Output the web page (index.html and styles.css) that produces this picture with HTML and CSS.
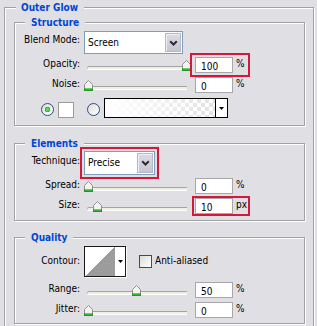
FILE: index.html
```html
<!DOCTYPE html>
<html>
<head>
<meta charset="utf-8">
<link rel="stylesheet" href="styles.css">
</head>
<body>
<svg class="defs" width="0" height="0" aria-hidden="true">
  <defs>
    <symbol id="thumb" viewBox="0 0 9 11">
      <path d="M.5 4.5L4.5 .5l4 4v6h-8z" fill="#f2f2ee" stroke="#8e8f8f"/>
      <path d="M1.5 4.8L4.5 1.8" stroke="#fff" fill="none"/>
      <rect x="0" y="8.5" width="9" height="2.5" fill="#1d971d"/>
      <rect x="1" y="8.5" width="7" height="1" fill="#5ccc5c"/>
    </symbol>
    <symbol id="chev" viewBox="0 0 9 6">
      <path d="M1.2 1.2L4.5 4.5 7.8 1.2" fill="none" stroke="#2b2b33" stroke-width="2"/>
    </symbol>
    <symbol id="tri" viewBox="0 0 5 3">
      <path d="M0 0h5L2.5 3z" fill="#000"/>
    </symbol>
  </defs>
</svg>

<fieldset class="group outer">
  <legend>Outer Glow</legend>

  <fieldset class="group sec sec-structure">
    <legend>Structure</legend>
    <div class="row r-select r-blend">
      <span class="lbl">Blend Mode:</span>
      <span class="select sel-blend"><span class="sel-text">Screen</span><span class="sel-btn"><svg width="9" height="6"><use href="#chev"/></svg></span></span>
    </div>
    <div class="row r-val r-first">
      <span class="lbl">Opacity:</span>
      <span class="slider"><span class="track"></span><svg class="thumb" width="9" height="11" style="left:98px"><use href="#thumb"/></svg></span>
      <span class="val mark mark-opacity"><span class="num">100</span><span class="unit">%</span></span>
    </div>
    <div class="row r-val">
      <span class="lbl">Noise:</span>
      <span class="slider"><span class="track"></span><svg class="thumb" width="9" height="11" style="left:0px"><use href="#thumb"/></svg></span>
      <span class="val"><span class="num">0</span><span class="unit">%</span></span>
    </div>
    <div class="row r-fill">
      <span class="radio on"></span>
      <span class="swatch"></span>
      <span class="radio"></span>
      <span class="gradpick"><span class="grad"></span><span class="gp-btn"><svg width="5" height="3"><use href="#tri"/></svg></span></span>
    </div>
  </fieldset>

  <fieldset class="group sec sec-elements">
    <legend>Elements</legend>
    <div class="row r-select r-tech">
      <span class="lbl">Technique:</span>
      <span class="select sel-tech mark mark-tech"><span class="sel-text">Precise</span><span class="sel-btn"><svg width="9" height="6"><use href="#chev"/></svg></span></span>
    </div>
    <div class="row r-val r-first">
      <span class="lbl">Spread:</span>
      <span class="slider"><span class="track"></span><svg class="thumb" width="9" height="11" style="left:0px"><use href="#thumb"/></svg></span>
      <span class="val"><span class="num">0</span><span class="unit">%</span></span>
    </div>
    <div class="row r-val">
      <span class="lbl">Size:</span>
      <span class="slider"><span class="track"></span><svg class="thumb" width="9" height="11" style="left:9px"><use href="#thumb"/></svg></span>
      <span class="val mark mark-size"><span class="num">10</span><span class="unit">px</span></span>
    </div>
  </fieldset>

  <fieldset class="group sec sec-quality">
    <legend>Quality</legend>
    <div class="row r-contour">
      <span class="lbl">Contour:</span>
      <span class="contour">
        <svg class="curve" width="30" height="29" viewBox="0 0 30 29" shape-rendering="crispEdges"><rect width="30" height="29" fill="#fff"/><path d="M0 29L30 0V29z" fill="#9c9c9c"/></svg>
        <span class="ct-btn"><svg width="5" height="3"><use href="#tri"/></svg></span>
      </span>
      <span class="check"></span>
      <span class="check-lbl">Anti-aliased</span>
    </div>
    <div class="row r-val r-range">
      <span class="lbl">Range:</span>
      <span class="slider"><span class="track"></span><svg class="thumb" width="9" height="11" style="left:48px"><use href="#thumb"/></svg></span>
      <span class="val"><span class="num">50</span><span class="unit">%</span></span>
    </div>
    <div class="row r-val">
      <span class="lbl">Jitter:</span>
      <span class="slider"><span class="track"></span><svg class="thumb" width="9" height="11" style="left:0px"><use href="#thumb"/></svg></span>
      <span class="val"><span class="num">0</span><span class="unit">%</span></span>
    </div>
  </fieldset>
</fieldset>
</body>
</html>
```
FILE: styles.css
```css
* { box-sizing: border-box; }
html, body { margin: 0; padding: 0; background: #e0dfe3; }
body {
  width: 317px;
  height: 326px;
  overflow: hidden;
  font: 10px/12px "DejaVu Sans Condensed", "DejaVu Sans", sans-serif;
  color: #000;
}
.defs { position: absolute; width: 0; height: 0; }

/* group boxes */
.group {
  border: 1px solid #a2a1a6;
  box-shadow: inset 1px 1px 0 #fff, 1px 1px 0 #fff;
  min-width: 0;
  margin: 0;
}
.group > legend {
  font-weight: bold;
  color: #0046d5;
  line-height: 13px;
  background: #e0dfe3;
}
.outer {
  width: 310px;
  margin: 1px 0 0 4px;
  padding: 2px 8px 14px 9px;
}
.outer > legend { margin-left: 2px; padding: 0 6px 0 5px; }
.sec > legend { margin-left: 10px; padding: 0 6px; }
.sec-structure { padding: 2px 0 7px 0; }
.sec-elements { margin-top: 11px; padding: 1px 0 6px 0; }
.sec-quality { margin-top: 10px; padding: 2px 0 5px 0; }

/* rows */
.row { display: flex; align-items: center; }
.lbl {
  flex: none;
  width: 65px;
  margin-right: 4px;
  text-align: right;
  white-space: nowrap;
  padding-bottom: 2px;
}
.r-select .lbl { padding-bottom: 5px; }
.r-blend { height: 23px; }
.r-tech { height: 24px; }
.r-val { height: 16px; margin-top: 4px; }
.r-val.r-first { margin-top: 3px; }
.r-fill { height: 20px; margin-top: 5px; padding-left: 26px; align-items: flex-end; }
.r-contour { height: 31px; }
.r-val.r-range { margin-top: 5px; }

/* select */
.select {
  display: flex;
  height: 100%;
  border: 1px solid #7f9db9;
  background: #fff;
  position: relative;
}
.sel-blend { width: 99px; }
.sel-tech { width: 71px; }
.sel-text { flex: 1; padding: 5px 0 0 3px; white-space: nowrap; }
.sel-btn {
  flex: none;
  width: 16px;
  margin: 1px;
  display: flex;
  align-items: center;
  justify-content: center;
  background: linear-gradient(#dcdce6, #c6c6d2);
  border: 1px solid #b5b6c6;
  box-shadow: inset 1px 1px 0 #eeeef4;
}

/* slider */
.slider {
  flex: none;
  position: relative;
  width: 107px;
  height: 11px;
  margin-right: 4px;
}
.track {
  position: absolute;
  left: 3px;
  right: 4px;
  top: 6px;
  height: 3px;
  border-top: 1px solid #a3a3a3;
  border-left: 1px solid #b5b5b5;
  border-radius: 2px 0 0 2px;
  background: #f1efe4;
  box-shadow: 0 1px 0 #fff;
}
.thumb { position: absolute; top: 0; display: block; }

/* value field */
.val { display: flex; align-items: center; position: relative; height: 16px; }
.num {
  width: 38px;
  height: 16px;
  border: 1px solid #a7a6aa;
  background: #fff;
  padding: 3px 0 0 5px;
  line-height: 11px;
  overflow: hidden;
}
.unit { margin-left: 3px; padding-bottom: 3px; }

/* red annotation frames */
.mark::after {
  content: "";
  position: absolute;
  border: 2px solid #d2193c;
  pointer-events: none;
}
.mark-opacity::after { top: -4px; bottom: -4px; left: -5px; right: -5px; }
.mark-tech::after { top: -5px; bottom: -5px; left: -5px; right: -5px; }
.mark-size::after { top: -2px; bottom: -2px; left: -3px; right: -3px; }

/* radios, swatch, gradient picker */
.radio {
  flex: none;
  width: 13px;
  height: 13px;
  border-radius: 50%;
  border: 1px solid #2d4f7c;
  background: linear-gradient(135deg, #dcdcd6, #fff);
  margin-bottom: 2px;
}
.radio.on {
  background: radial-gradient(circle, #5bd55b 0 1.5px, #1f991f 2.5px, transparent 3px), linear-gradient(135deg, #dcdcd6, #fff);
}
.swatch {
  flex: none;
  width: 16px;
  height: 16px;
  margin-left: 4px;
  border: 1px solid #9b9b9b;
  background: #fff;
}
.radio + .swatch + .radio { margin-left: 13px; }
.gradpick {
  flex: none;
  display: flex;
  width: 124px;
  height: 20px;
  margin-left: 4px;
  border: 1px solid #000;
  align-self: flex-start;
}
.grad {
  flex: 1;
  background:
    linear-gradient(to right, #fff, rgba(255,255,255,0)),
    repeating-conic-gradient(#e2e2e2 0 25%, #fff 0 50%) 0 0 / 8px 8px;
}
.gp-btn {
  flex: none;
  width: 12px;
  border-left: 1px solid #000;
  background: #fff;
  display: flex;
  align-items: center;
  justify-content: center;
}

/* contour */
.contour {
  flex: none;
  display: flex;
  width: 42px;
  height: 31px;
  border: 1px solid #1a1a1a;
  box-shadow: 1px 1px 0 #fff;
  background: #fff;
}
.curve { display: block; flex: none; }
.ct-btn { flex: 1; display: flex; align-items: center; justify-content: center; }
.check {
  flex: none;
  width: 13px;
  height: 13px;
  margin-left: 13px;
  border: 1px solid #2d4f7c;
  background: linear-gradient(135deg, #dcdcd6, #fff);
}
.check-lbl { margin-left: 3px; padding-bottom: 2px; }
```
